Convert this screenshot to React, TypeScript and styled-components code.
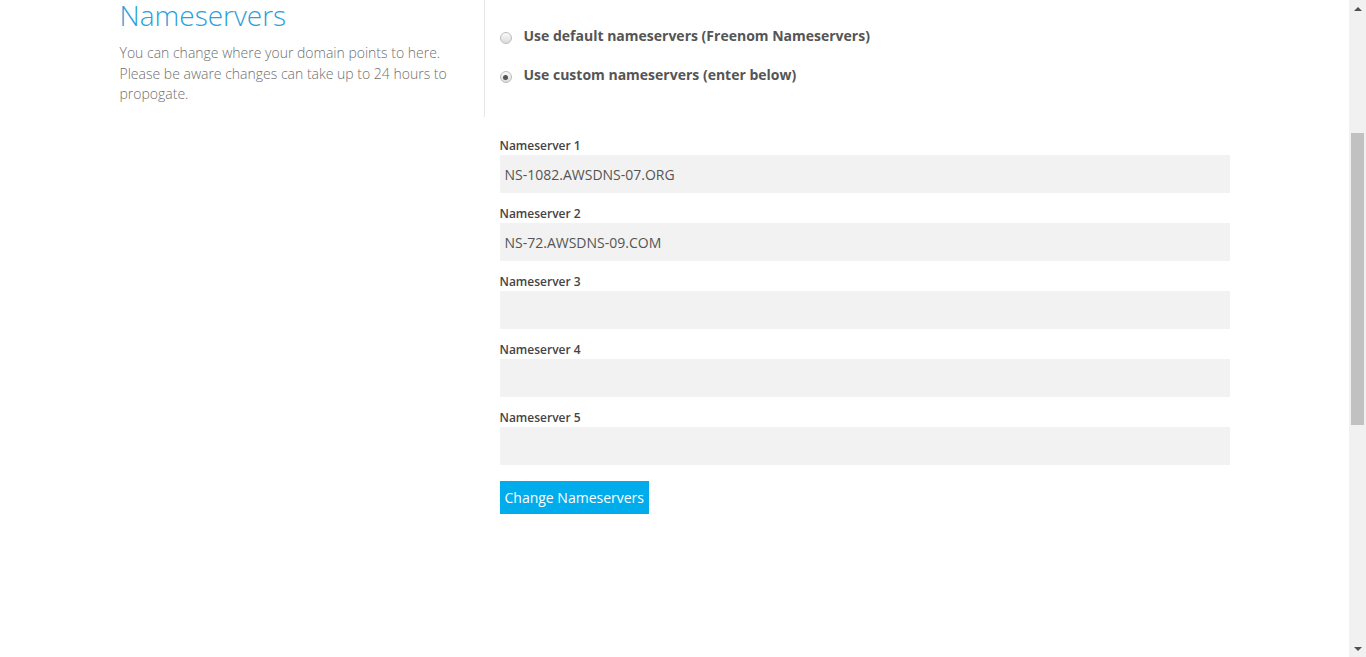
import React from "react";
import styled, { createGlobalStyle } from "styled-components";

const GlobalStyle = createGlobalStyle`
  html, body {
    margin: 0;
    padding: 0;
    background: #fff;
    font-family: "Open Sans", "Liberation Sans", sans-serif;
  }
`;

const Shell = styled.div`
  display: flex;
  height: 100vh;
  overflow: hidden;
`;

const Viewport = styled.main`
  flex: 1;
  min-width: 0;
`;

const ScrollRail = styled.div`
  width: 17px;
  flex-shrink: 0;
  background: #f1f1f1;
  display: flex;
  flex-direction: column;
  align-items: center;
`;

const ScrollArrow = styled.div<{ down?: boolean }>`
  height: 17px;
  width: 17px;
  display: flex;
  align-items: center;
  justify-content: center;

  &::before {
    content: "";
    width: 0;
    height: 0;
    border-left: 4px solid transparent;
    border-right: 4px solid transparent;
    ${(p) =>
      p.down
        ? "border-top: 4px solid #505050;"
        : "border-bottom: 4px solid #505050;"}
  }
`;

const ScrollTrack = styled.div`
  flex: 1;
  width: 100%;
  display: flex;
  flex-direction: column;
  align-items: center;
  padding-top: 116px;
  box-sizing: border-box;
`;

const ScrollThumb = styled.div`
  width: 13px;
  height: 292px;
  background: #c1c1c1;
`;

const Container = styled.div`
  width: 1140px;
  margin: 0 auto;
`;

const Row = styled.div`
  display: flex;
`;

const SideColumn = styled.div<{ bare?: boolean }>`
  width: 380px;
  flex-shrink: 0;
  box-sizing: border-box;
  padding: 0 15px;
  align-self: flex-start;
  height: ${(p) => (p.bare ? "0" : "117px")};
  border-right: ${(p) => (p.bare ? "none" : "1px solid #e6e6e6")};
`;

const MainColumn = styled.div`
  width: 760px;
  box-sizing: border-box;
  padding: 0 15px;
`;

const Title = styled.h2`
  margin: 0;
  font-size: 28px;
  font-weight: 300;
  line-height: 31px;
  color: #2d9fdb;
`;

const Intro = styled.p`
  margin: 12px 0 0;
  font-size: 14px;
  font-weight: 300;
  line-height: 20.5px;
  color: #6f6f6f;
`;

const RadioGroup = styled.div`
  display: flex;
  flex-direction: column;
  gap: 17px;
  padding-top: 25px;
`;

const RadioRow = styled.label`
  display: flex;
  align-items: center;
  gap: 12px;
  font-size: 14px;
  font-weight: 700;
  color: #555;
  line-height: 22px;
`;

const RadioDot = styled.span<{ checked?: boolean }>`
  width: 12px;
  height: 12px;
  border-radius: 50%;
  box-sizing: border-box;
  border: 1px solid #bdbdbd;
  background: linear-gradient(#fafafa, #dcdcdc);
  margin-top: 4px;
  display: flex;
  align-items: center;
  justify-content: center;

  &::after {
    content: "";
    display: ${(p) => (p.checked ? "block" : "none")};
    width: 5px;
    height: 5px;
    border-radius: 50%;
    background: #555;
  }
`;

const FieldList = styled.div`
  display: flex;
  flex-direction: column;
  gap: 13px;
  margin-top: 21px;
`;

const Field = styled.div`
  display: flex;
  flex-direction: column;
`;

const FieldLabel = styled.label`
  font-size: 12px;
  font-weight: 600;
  color: #444;
  line-height: 16px;
  margin-bottom: 1px;
`;

const TextInput = styled.input`
  height: 38px;
  box-sizing: border-box;
  border: none;
  background: #f2f2f2;
  padding: 0 5px;
  font-family: "Open Sans", "Liberation Sans", sans-serif;
  font-size: 14px;
  color: #555;
  outline: none;
`;

const SubmitButton = styled.button`
  align-self: flex-start;
  margin-top: 3px;
  height: 33px;
  padding: 0 5px;
  border: none;
  background: #00acec;
  color: #fff;
  font-family: "Open Sans", "Liberation Sans", sans-serif;
  font-size: 14px;
  cursor: pointer;
`;

const nameservers = ["NS-1082.AWSDNS-07.ORG", "NS-72.AWSDNS-09.COM", "", "", ""];

export default function App() {
  return (
    <Shell>
      <GlobalStyle />
      <Viewport>
        <Container>
          <Row>
            <SideColumn>
              <Title>Nameservers</Title>
              <Intro>
                You can change where your domain points to here. Please be aware
                changes can take up to 24 hours to propogate.
              </Intro>
            </SideColumn>
            <MainColumn>
              <RadioGroup>
                <RadioRow>
                  <RadioDot />
                  Use default nameservers (Freenom Nameservers)
                </RadioRow>
                <RadioRow>
                  <RadioDot checked />
                  Use custom nameservers (enter below)
                </RadioRow>
              </RadioGroup>
            </MainColumn>
          </Row>
          <Row>
            <SideColumn bare />
            <MainColumn>
              <FieldList>
                {nameservers.map((ns, i) => (
                  <Field key={i}>
                    <FieldLabel>Nameserver {i + 1}</FieldLabel>
                    <TextInput defaultValue={ns} />
                  </Field>
                ))}
                <SubmitButton>Change Nameservers</SubmitButton>
              </FieldList>
            </MainColumn>
          </Row>
        </Container>
      </Viewport>
      <ScrollRail>
        <ScrollArrow />
        <ScrollTrack>
          <ScrollThumb />
        </ScrollTrack>
        <ScrollArrow down />
      </ScrollRail>
    </Shell>
  );
}
